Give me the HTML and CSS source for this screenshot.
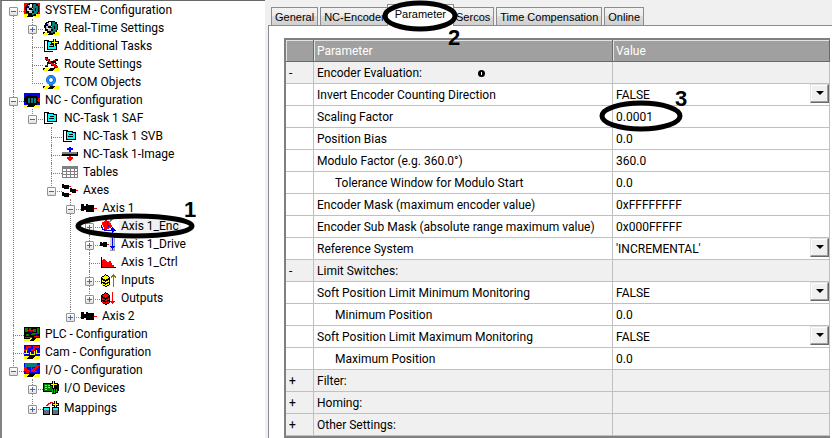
FILE: index.html
```html
<!DOCTYPE html>
<html lang="en">
<head>
<meta charset="utf-8">
<title>Axis 1_Enc - Parameter</title>
<link rel="stylesheet" href="styles.css">
</head>
<body>
<svg class="sprites" aria-hidden="true">
  <symbol id="strip" viewBox="0 0 16 16"><path fill="#ff0" d="M0 12h16v3H0z"/><path d="M4 15l4-3h5l-4 3zM0 12h3l-3 2z"/></symbol>
  <symbol id="head" viewBox="0 0 16 16"><path fill="#000" d="M3 2h2V1h7v1h2v2h1v6h-1v2h-2v2H7v-1H4v-2H2V8H1V5h1V3h1z"/><path fill="#008080" d="M9 2h3v2h2v6h-1v2h-3v1H8V8h1z"/><path fill="#c0c0c0" d="M4 3h5v4H8v4H5V9H3V6h1z"/><path fill="#fff" d="M6 2h2v3H6zM4 8h2v1H4z"/><path fill="#000" d="M5 6h3v2H5zM8 9h2v2H8zM11 6h1v3h-1zM8 3h1v3H8z"/><path fill="#000080" d="M3 4h2v2H3zM5 11h2v1H5z"/></symbol>
  <symbol id="sys" viewBox="0 0 16 16"><path fill="#f00" d="M0 1h16v14H0z"/><path fill="#ff0" d="M0 12h16v3H0z"/><path d="M2 15l4-3h7l-5 3z"/><use href="#head"/></symbol>
  <symbol id="rt" viewBox="0 0 16 16"><use href="#strip"/><use href="#head"/></symbol>
  <symbol id="task" viewBox="0 0 16 16"><path fill="#000" d="M1 2h5v1H2v10h8v1H1z"/><path fill="#000" d="M4 3h7v1h3v8H4z"/><path fill="#0ff" d="M5 4h5v1h3v6H5z"/><path d="M7 6h4v1H7zM6 8h5v1H6z"/></symbol>
  <symbol id="addtask" viewBox="0 0 16 16"><use href="#task"/><path fill="#000" d="M10 1h3v2h3v3h-3v2h-3V6H8V3h2z"/><path fill="#ff0" d="M11 1h1v3h3v1h-3v3h-1V5H9V4h2z"/></symbol>
  <symbol id="route" viewBox="0 0 16 16"><use href="#strip"/><path fill="#000" d="M2 1h3v2h2v2h5V3h3v2h-2v2h-2v2h3v3h-3v-2H8V8H5v3H2V9h2V6h2L2 4z"/><path fill="#f00" d="M2 2h2v1h2v2h2v2h3v1h2v2h2v2h-2v-1h-2V9H8V7H6V5H4V4H2zM10 4h3v1h-3zM2 9h3v1H2z"/><path fill="#00f" d="M4 7h2v1H4zM12 7h2v1h-2z"/></symbol>
  <symbol id="tcom" viewBox="0 0 16 16"><use href="#strip"/><g shape-rendering="auto"><circle cx="8" cy="6" r="3.500" fill="#fff" stroke="#004a9c" stroke-width="3"/><circle cx="8" cy="6" r="3.500" fill="none" stroke="#1e90ff" stroke-width="2"/></g><path fill="#1e70d0" d="M6 10h4v2H6z"/></symbol>
  <symbol id="nc" viewBox="0 0 16 16"><path fill="#00f" d="M0 1h16v14H0z"/><path fill="#ff0" d="M0 13h16v2H0z"/><path d="M1 4h3V3h3v1h6v2h2v5h-2v2H4v-1H2v-2H0V6h1zM2 15l4-3h7l-4 3z"/><path fill="#008080" d="M4 6h2v5H4zM7 6h2v5H7zM10 6h2v5h-2z"/><path fill="#f00" d="M14 6h2v4h-2v-1h-1V8h1z"/></symbol>
  <symbol id="image" viewBox="0 0 16 16"><path fill="#000" d="M0 6h16v4H0z"/><path fill="#808080" d="M0 6h15v2H0z"/><path fill="#00f" d="M7 1h2v1h2v2H9v2H7V4H5V2h2z"/><path fill="#f00" d="M7 10h2v1h2v2h-1v1H9v1H7v-1H6v-1H5v-2h2z"/></symbol>
  <symbol id="tables" viewBox="0 0 16 16"><path fill="#808080" d="M0 2h16v12H0z"/><path fill="#fff" d="M1 5h3v2H1zM5 5h3v2H5zM9 5h3v2H9zM13 5h2v2h-2zM1 8h3v2H1zM5 8h3v2H5zM9 8h3v2H9zM13 8h2v2h-2zM1 11h3v2H1zM5 11h3v2H5zM9 11h3v2H9zM13 11h2v2h-2z"/></symbol>
  <symbol id="axes" viewBox="0 0 16 16"><path d="M0 2h2v1h5v4H2V6H0zM0 10h2v1h5v4H2v-1H0zM8 6h2v1h4v4h-4v-1H8z"/><path fill="#f00" d="M7 4h2v1H7zM7 12h2v1H7zM14 8h2v1h-2z"/></symbol>
  <symbol id="axis" viewBox="0 0 16 16"><path d="M0 4h3v2h2V4h2v1h6v7H5v-2H3v1H0z"/><path fill="#f00" d="M13 8h3v1h-3z"/></symbol>
  <symbol id="enc" viewBox="0 0 16 16"><path fill="#f00" d="M5 2h2v1h2v2h2v2h1v2h-1v1H9v1H7v1H5v-1H4V9H3V7H2V4h2V3h1z"/><path fill="#808080" d="M10 1h3v1h-1v1h-1v1h-1v1H9V3h1z"/><path fill="#00f" d="M1 7h1v2h1v2h2v1h6v-2h1V9h1v1h1v1h1v1h1v1h-2v1h-1v1h-1v-2H4v-1H2v-2H1zM7 4h1v3h1v2H8V7H7z"/></symbol>
  <symbol id="drive" viewBox="0 0 16 16"><path d="M0 6h2v1h1V6h4v5H3v-1H0z"/><path fill="#f00" d="M7 8h2v1H7z"/><path fill="#a0a0a0" d="M10 1h5v14h-5z"/><path fill="#d0d0d0" d="M10 1h4v13h-4z"/><path fill="#00f" d="M12 2h1v8h2v1h-1v1h-1v2h-1v-2h-1v-1h-1v-1h2z"/></symbol>
  <symbol id="ctrl" viewBox="0 0 16 16"><path fill="#000" d="M1 3h1v10h14v1H1z"/><path fill="#f00" d="M2 6h1V5h2v1h1v1h1v1h2V7h2v2h1v2h2v2H2z"/></symbol>
  <symbol id="stack" viewBox="0 0 16 16"><path fill="#000" d="M5 2h1v1h2v1h1v1h1v8H9v1H7v1H5v-1H3v-1H2v-1H1V5h1V4h2V3h1z"/><path fill="currentColor" d="M5 3h1v1h2v1h1v1H8v1H6v1H5V7H3V6H2V5h2V4h1zM2 8h1v1h2v1h1V9h2V8h1v2H7v1H5v-1H2zM2 11h1v1h2v1h1v-1h2v-1h1v2H7v1H5v-1H2z"/></symbol>
  <symbol id="inputs" viewBox="0 0 16 16"><use href="#stack" color="#ff0"/><path fill="#808000" d="M13 2h1v1h1v1h1v2h-1V5h-1v10h-1V5h-1v1h-1V4h1V3h1z"/></symbol>
  <symbol id="outputs" viewBox="0 0 16 16"><use href="#stack" color="#f00"/><path fill="#f00" d="M12 2h1v9h2v1h-1v1h-1v1h-1v-1h-1v-1h-1v-1h2z"/></symbol>
  <symbol id="plc" viewBox="0 0 16 16"><path fill="#000" d="M0 1h16v14H0z"/><path fill="#008000" d="M1 2h3v4H1zM5 2h2v2H5zM9 3h3v3H9zM13 2h2v6h-2zM2 8h3v2H2zM7 8h4v1H7z"/><path fill="#f00" d="M4 4h5v1H4zM8 7h6v1H8zM1 11h7v1H1zM10 10h5v1h-5z"/><path fill="#00f" d="M6 5h2v2H6zM11 8h2v2h-2z"/><path fill="#ff0" d="M0 13h4l3-1h2l-4 3H0zM9 15l3-3h4v3z"/></symbol>
  <symbol id="cam" viewBox="0 0 16 16"><path fill="#00f" d="M0 1h16v11H0z"/><path fill="#ff0" d="M0 12h16v3H0z"/><path d="M2 15l4-4h7l-5 4z"/><path fill="#f00" d="M0 5h2V2h5v3h2V2h6v2h-4v3H7V4H4v3H0z"/><path fill="#ff0" d="M0 9h2V6h1v3h2v1H0zM6 8h1v2h3V7h1v4H6zM12 6h1v3h3v1h-4z"/></symbol>
  <symbol id="io" viewBox="0 0 16 16"><path fill="#00f" d="M0 1h16v14H0z"/><path fill="#008080" d="M1 1h12v4H1z"/><path fill="#ff0" d="M0 12h16v3H0z"/><path d="M2 15l5-4h6l-5 4zM3 9h3v2H3z"/><path fill="#f00" d="M0 5h3v3h3v2H5v1H2V9H0zM13 3h3v1h-1v1h-1v1h-1v1h-1v1h-1v1h2v1H7V5h1v2h1V6h2V5h1V4h1z"/></symbol>
  <symbol id="devices" viewBox="0 0 16 16"><path d="M0 3h14v1h2v7h-1v2h-2v1H9v-2H0z"/><path fill="#008000" d="M1 4h8v7H1z"/><path fill="#c0c0c0" d="M2 5h2v1H2zM5 5h2v1H5zM2 7h2v1H2zM5 7h2v1H5zM2 9h2v1H2z"/><path fill="#00c000" d="M9 9h1v4H9zM11 9h1v4h-1zM13 9h1v3h-1z"/><path d="M9 1h3v2h3v3h-3v3H9V6H7V3h2z"/><path fill="#ff0" d="M10 1h1v3h3v1h-3v3h-1V5H8V4h2z"/></symbol>
  <symbol id="maps" viewBox="0 0 16 16"><path d="M0 7h7v8H0zM9 7h7v8H9z"/><path fill="#0ff" d="M1 8h5v2H1zM10 8h5v2h-5z"/><path fill="#607080" d="M1 10h5v4H1zM10 10h5v4h-5z"/><path fill="#f00" d="M3 5h1V4h1V3h2V2h3v1H8v1H6v1H5v1H3z"/><path d="M11 1h3v2h2v3h-2v2h-3V6H9V3h2z"/><path fill="#ff0" d="M12 1h1v3h2v1h-2v2h-1V5h-2V4h2z"/></symbol>
</svg>

<main class="window">
  <nav class="tree" aria-label="Project">
    <ul class="root">
      <li><div class="row"><span class="twig"><button class="toggle minus" aria-label="Collapse"></button></span><svg class="icon"><use href="#sys"/></svg><span class="label">SYSTEM - Configuration</span></div>
        <ul>
          <li><div class="row"><span class="twig"><button class="toggle plus" aria-label="Expand"></button></span><svg class="icon"><use href="#rt"/></svg><span class="label">Real-Time Settings</span></div></li>
          <li><div class="row"><span class="twig"></span><svg class="icon"><use href="#addtask"/></svg><span class="label">Additional Tasks</span></div></li>
          <li><div class="row"><span class="twig"></span><svg class="icon"><use href="#route"/></svg><span class="label">Route Settings</span></div></li>
          <li><div class="row"><span class="twig"></span><svg class="icon"><use href="#tcom"/></svg><span class="label">TCOM Objects</span></div></li>
        </ul>
      </li>
      <li><div class="row"><span class="twig"><button class="toggle minus" aria-label="Collapse"></button></span><svg class="icon"><use href="#nc"/></svg><span class="label">NC - Configuration</span></div>
        <ul>
          <li><div class="row"><span class="twig"><button class="toggle minus" aria-label="Collapse"></button></span><svg class="icon"><use href="#task"/></svg><span class="label">NC-Task 1 SAF</span></div>
            <ul>
              <li><div class="row"><span class="twig"></span><svg class="icon"><use href="#task"/></svg><span class="label">NC-Task 1 SVB</span></div></li>
              <li><div class="row"><span class="twig"></span><svg class="icon"><use href="#image"/></svg><span class="label">NC-Task 1-Image</span></div></li>
              <li><div class="row"><span class="twig"></span><svg class="icon"><use href="#tables"/></svg><span class="label">Tables</span></div></li>
              <li><div class="row"><span class="twig"><button class="toggle minus" aria-label="Collapse"></button></span><svg class="icon"><use href="#axes"/></svg><span class="label">Axes</span></div>
                <ul>
                  <li><div class="row"><span class="twig"><button class="toggle minus" aria-label="Collapse"></button></span><svg class="icon"><use href="#axis"/></svg><span class="label">Axis 1</span></div>
                    <ul>
                      <li><div class="row"><span class="twig"><button class="toggle plus" aria-label="Expand"></button></span><svg class="icon"><use href="#enc"/></svg><span class="label selected">Axis 1_Enc</span></div></li>
                      <li><div class="row"><span class="twig"><button class="toggle plus" aria-label="Expand"></button></span><svg class="icon"><use href="#drive"/></svg><span class="label">Axis 1_Drive</span></div></li>
                      <li><div class="row"><span class="twig"></span><svg class="icon"><use href="#ctrl"/></svg><span class="label">Axis 1_Ctrl</span></div></li>
                      <li><div class="row"><span class="twig"><button class="toggle plus" aria-label="Expand"></button></span><svg class="icon"><use href="#inputs"/></svg><span class="label">Inputs</span></div></li>
                      <li><div class="row"><span class="twig"><button class="toggle plus" aria-label="Expand"></button></span><svg class="icon"><use href="#outputs"/></svg><span class="label">Outputs</span></div></li>
                    </ul>
                  </li>
                  <li><div class="row"><span class="twig"><button class="toggle plus" aria-label="Expand"></button></span><svg class="icon"><use href="#axis"/></svg><span class="label">Axis 2</span></div></li>
                </ul>
              </li>
            </ul>
          </li>
        </ul>
      </li>
      <li><div class="row"><span class="twig"></span><svg class="icon"><use href="#plc"/></svg><span class="label">PLC - Configuration</span></div></li>
      <li><div class="row"><span class="twig"></span><svg class="icon"><use href="#cam"/></svg><span class="label">Cam - Configuration</span></div></li>
      <li><div class="row"><span class="twig"><button class="toggle minus" aria-label="Collapse"></button></span><svg class="icon"><use href="#io"/></svg><span class="label">I/O - Configuration</span></div>
        <ul class="spaced">
          <li><div class="row"><span class="twig"><button class="toggle plus" aria-label="Expand"></button></span><svg class="icon"><use href="#devices"/></svg><span class="label">I/O Devices</span></div></li>
          <li><div class="row"><span class="twig"><button class="toggle plus" aria-label="Expand"></button></span><svg class="icon"><use href="#maps"/></svg><span class="label">Mappings</span></div></li>
        </ul>
      </li>
    </ul>
  </nav>

  <section class="detail">
    <div class="tabs" role="tablist">
      <button class="tab" role="tab">General</button>
      <button class="tab" role="tab">NC-Encoder</button>
      <button class="tab active" role="tab" aria-selected="true">Parameter</button>
      <button class="tab" role="tab">Sercos</button>
      <button class="tab" role="tab">Time Compensation</button>
      <button class="tab" role="tab">Online</button>
    </div>
    <div class="sheet" role="tabpanel">
      <table class="grid">
        <colgroup><col class="c-sign"><col class="c-name"><col></colgroup>
        <thead><tr><th></th><th>Parameter</th><th>Value</th></tr></thead>
        <tbody>
          <tr class="group"><td>-</td><td>Encoder Evaluation:<span class="marker"></span></td><td></td></tr>
          <tr><td></td><td><label for="invert">Invert Encoder Counting Direction</label></td><td><span class="combo"><select id="invert"><option>FALSE</option><option>TRUE</option></select></span></td></tr>
          <tr><td></td><td>Scaling Factor</td><td>0.0001</td></tr>
          <tr><td></td><td>Position Bias</td><td>0.0</td></tr>
          <tr><td></td><td>Modulo Factor (e.g. 360.0°)</td><td>360.0</td></tr>
          <tr><td></td><td class="sub">Tolerance Window for Modulo Start</td><td>0.0</td></tr>
          <tr><td></td><td>Encoder Mask (maximum encoder value)</td><td>0xFFFFFFFF</td></tr>
          <tr><td></td><td>Encoder Sub Mask (absolute range maximum value)</td><td>0x000FFFFF</td></tr>
          <tr><td></td><td><label for="refsys">Reference System</label></td><td><span class="combo"><select id="refsys"><option>'INCREMENTAL'</option></select></span></td></tr>
          <tr class="group"><td>-</td><td>Limit Switches:</td><td></td></tr>
          <tr><td></td><td><label for="softmin">Soft Position Limit Minimum Monitoring</label></td><td><span class="combo"><select id="softmin"><option>FALSE</option><option>TRUE</option></select></span></td></tr>
          <tr><td></td><td class="sub">Minimum Position</td><td>0.0</td></tr>
          <tr><td></td><td><label for="softmax">Soft Position Limit Maximum Monitoring</label></td><td><span class="combo"><select id="softmax"><option>FALSE</option><option>TRUE</option></select></span></td></tr>
          <tr><td></td><td class="sub">Maximum Position</td><td>0.0</td></tr>
          <tr class="group"><td>+</td><td>Filter:</td><td></td></tr>
          <tr class="group"><td>+</td><td>Homing:</td><td></td></tr>
          <tr class="group"><td>+</td><td>Other Settings:</td><td></td></tr>
        </tbody>
      </table>
    </div>
  </section>
</main>

<svg class="callouts" viewBox="0 0 832 438">
  <ellipse cx="135" cy="226" rx="57" ry="10"/>
  <ellipse cx="420" cy="16" rx="35" ry="13"/>
  <ellipse cx="641" cy="116" rx="39" ry="13"/>
  <text x="184" y="217">1</text>
  <text x="448" y="45">2</text>
  <text x="675" y="106">3</text>
</svg>
</body>
</html>
```
FILE: styles.css
```css
* { box-sizing: border-box; }

body {
  margin: 0;
  background: #f0f0f0;
  color: #000;
  font: 12px/18px Roboto, "Open Sans", sans-serif;
  overflow: hidden;
}

.sprites { position: absolute; width: 0; height: 0; }

.window {
  display: grid;
  grid-template-columns: 265px minmax(0, 1fr);
  gap: 3px;
  min-height: 100vh;
}

/* Project tree */
.tree {
  background: #fff;
  border-top: 1px solid #696969;
  border-left: 2px solid #828282;
}

.tree ul { list-style: none; margin: 0; padding: 0 0 0 19px; }
.tree .root { padding-left: 7px; }
.tree li { position: relative; }

.tree li::before {
  content: "";
  position: absolute;
  top: 0;
  bottom: 0;
  left: 4px;
  border-left: 1px dotted #808080;
}

.tree li:last-child::before { bottom: auto; height: 11px; }
.tree .root > li:first-child::before { top: 11px; }
.tree .spaced { display: grid; gap: 2px; }

.row { display: flex; align-items: center; height: 18px; }

.twig { position: relative; width: 15px; height: 18px; padding-top: 6px; }

.twig::before {
  content: "";
  position: absolute;
  top: 10px;
  left: 4px;
  right: 0;
  border-top: 1px dotted #808080;
}

.toggle {
  position: relative;
  display: block;
  width: 9px;
  height: 9px;
  padding: 0;
  border: 1px solid #919191;
  border-radius: 1px;
  background: linear-gradient(#4b63a7, #4b63a7) center / 5px 1px no-repeat, linear-gradient(#fff, #e2e2e2);
}

.toggle.plus {
  background: linear-gradient(#4b63a7, #4b63a7) center / 5px 1px no-repeat,
    linear-gradient(#4b63a7, #4b63a7) center / 1px 5px no-repeat, linear-gradient(#fff, #e2e2e2);
}

.icon { width: 16px; height: 16px; shape-rendering: crispEdges; }
.label { margin-left: 3px; padding: 0 2px; white-space: nowrap; }
.selected { background: #f0f0f0; }

/* Property pages */
.detail { display: flex; flex-direction: column; padding-top: 4px; }

.tabs { display: flex; align-items: flex-end; gap: 2px; padding-left: 3px; }

.tab {
  height: 18px;
  padding: 0 3px;
  border: 1px solid #898c95;
  border-bottom: 0;
  background: linear-gradient(#f2f2f2, #ebebeb 50%, #ddd 50%, #cfcfcf);
  color: #000;
  font: 11px/16px "Liberation Sans", Arial, sans-serif;
  white-space: nowrap;
}

.tab.active {
  height: 22px;
  padding: 0 7px 4px;
  margin: 0 -4px -1px;
  background: #fff;
  z-index: 1;
}

.sheet {
  flex: 1;
  padding: 12px 2px 0 15px;
  border: 1px solid #898c95;
  border-width: 1px 0 0 1px;
  background: #fff;
}

.grid {
  width: 100%;
  table-layout: fixed;
  border: 2px solid #808080;
  border-right: 0;
  border-collapse: separate;
  border-spacing: 0;
}

.c-sign { width: 28px; }
.c-name { width: 299px; }

.grid th, .grid td {
  height: 22px;
  padding: 0 3px;
  border: 1px solid #c0c0c0;
  border-width: 0 1px 1px 0;
  font-weight: 400;
  text-align: left;
  line-height: 18px;
  white-space: nowrap;
}

.grid th {
  background: #a0a0a0;
  border-color: #696969;
  box-shadow: inset 1px 1px #e3e3e3;
  color: #fff;
}

.group td { background: #f0f0f0; }
.grid .sub { padding-left: 21px; }

.marker {
  display: inline-block;
  width: 7px;
  height: 7px;
  margin-left: 56px;
  border-radius: 50%;
  background: linear-gradient(#fff, #fff) center / 1px 3px no-repeat, #000;
}

.combo { position: relative; display: block; height: 21px; margin: 0 -3px; }

.combo select {
  display: block;
  width: 100%;
  height: 21px;
  padding: 0 3px;
  border: 0;
  background: none;
  color: inherit;
  font: inherit;
  appearance: none;
}

.combo::before {
  content: "";
  position: absolute;
  top: 0;
  right: 0;
  width: 17px;
  height: 17px;
  border: 1px solid;
  border-color: #e3e3e3 #696969 #696969 #e3e3e3;
  background: #f0f0f0;
  box-shadow: inset -1px -1px #a0a0a0, inset 1px 1px #fff;
  pointer-events: none;
}

.combo::after {
  content: "";
  position: absolute;
  top: 7px;
  right: 5px;
  border: solid transparent;
  border-width: 4px 4px 0;
  border-top-color: #000;
  pointer-events: none;
}

/* Numbered marks drawn over the window */
.callouts {
  position: absolute;
  z-index: 2;
  top: 0;
  left: 0;
  width: 832px;
  height: 438px;
  pointer-events: none;
}

.callouts ellipse { fill: none; stroke: #000; stroke-width: 5px; }
.callouts text { font: bold 22px "Liberation Sans", Arial, sans-serif; }
```
